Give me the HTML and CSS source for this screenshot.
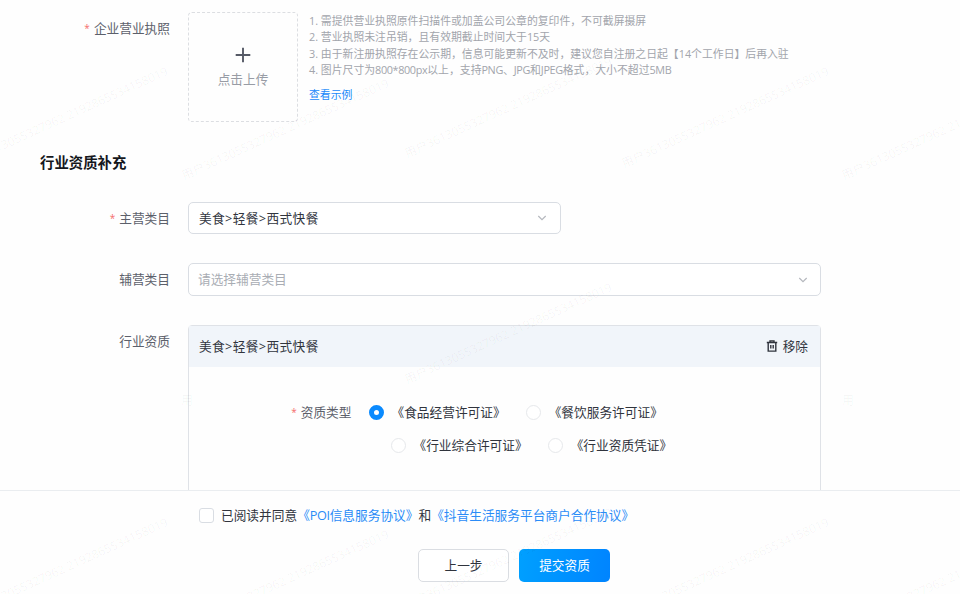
FILE: index.html
```
<!DOCTYPE html>
<html lang="zh-CN">
<head>
<meta charset="utf-8">
<title>行业资质补充</title>
<link rel="stylesheet" href="styles.css">
</head>
<body>
<main class="content">
  <section class="row license">
    <div class="label license-label"><i class="req">*</i>企业营业执照</div>
    <div class="upload">
      <svg class="plus" width="16" height="16" viewBox="0 0 16 16"><path d="M8 .7v14.6M.7 8h14.6" stroke="#565a66" stroke-width="1.9"/></svg>
      <span>点击上传</span>
    </div>
    <div class="hints">
      <p>1. 需提供营业执照原件扫描件或加盖公司公章的复印件，不可截屏摄屏</p>
      <p>2. 营业执照未注吊销，且有效期截止时间大于15天</p>
      <p>3. 由于新注册执照存在公示期，信息可能更新不及时，建议您自注册之日起【14个工作日】后再入驻</p>
      <p>4. 图片尺寸为<span class="latin">800*800px</span>以上，支持<span class="latin">PNG</span>、<span class="latin">JPG</span>和<span class="latin">JPEG</span>格式，大小不超过<span class="latin">5MB</span></p>
      <a class="example">查看示例</a>
    </div>
  </section>
  <h2 class="title">行业资质补充</h2>
  <section class="row main-cat">
    <div class="label"><i class="req">*</i>主营类目</div>
    <div class="select short"><span class="path">美食&gt;轻餐&gt;西式快餐</span>
      <svg width="10" height="8" viewBox="0 0 10 8"><path d="M1.3 2 5 5.6 8.700 2" fill="none" stroke="#b5b8be" stroke-width="1.2"/></svg></div>
  </section>
  <section class="row sub-cat">
    <div class="label">辅营类目</div>
    <div class="select"><span class="placeholder">请选择辅营类目</span>
      <svg width="10" height="8" viewBox="0 0 10 8"><path d="M1.3 2 5 5.6 8.700 2" fill="none" stroke="#b5b8be" stroke-width="1.2"/></svg></div>
  </section>
  <section class="row industry">
    <div class="label">行业资质</div>
    <div class="panel">
      <div class="panel-head"><span class="path">美食&gt;轻餐&gt;西式快餐</span>
        <span class="remove"><svg width="12" height="12" viewBox="0 0 12 12" fill="none" stroke="#30343d" stroke-width="1.4"><path d="M.8 2.500h10.400M4 2.200V.9h4v1.300M2.200 2.500v8.600h7.600V2.500M4.800 5v3.600M7.200 5v3.600"/></svg>移除</span>
      </div>
      <div class="panel-body">
        <div class="type-label"><i class="req">*</i>资质类型</div>
        <div class="radios">
          <div class="radio-row"><span class="radio"><b class="dot on"></b>《食品经营许可证》</span><span class="radio"><b class="dot"></b>《餐饮服务许可证》</span></div>
          <div class="radio-row second"><span class="radio"><b class="dot"></b>《行业综合许可证》</span><span class="radio"><b class="dot"></b>《行业资质凭证》</span></div>
        </div>
      </div>
    </div>
  </section>
</main>
<footer class="footer">
  <div class="agree"><b class="check"></b><span>已阅读并同意<a>《<span class="poi">POI</span>信息服务协议》</a>和<a>《抖音生活服务平台商户合作协议》</a></span></div>
  <div class="actions"><button class="btn">上一步</button><button class="btn primary">提交资质</button></div>
</footer>
<svg class="watermark" width="960" height="594" viewBox="0 0 960 594">
  <defs><text id="mark" textLength="226" transform="rotate(-24.500)">用户3613055327962 2192865534158019</text></defs>
  <use href="#mark" transform="translate(-37 168)"/>
  <use href="#mark" transform="translate(184 180)"/>
  <use href="#mark" transform="translate(407 158)"/>
  <use href="#mark" transform="translate(624 168)"/>
  <use href="#mark" transform="translate(844 180)"/>
  <use href="#mark" transform="translate(407 384)"/>
  <use href="#mark" transform="translate(-37 619)"/>
  <use href="#mark" transform="translate(184 631)"/>
  <use href="#mark" transform="translate(407 609)"/>
  <use href="#mark" transform="translate(624 619)"/>
  <use href="#mark" transform="translate(844 631)"/>
  <text x="181" y="405">用</text>
  <text x="842" y="405">用</text>
</svg>
</body>
</html>
```
FILE: styles.css
```
* { box-sizing: border-box; }
body {
  margin: 0;
  width: 960px;
  height: 594px;
  overflow: hidden;
  display: flex;
  flex-direction: column;
  background: #fefefe;
  color: #30343d;
  font: 12.7px/18px "Open Sans", "Noto Sans CJK SC", sans-serif;
}
p, h2 { margin: 0; }
.content { height: 490px; overflow: hidden; padding-top: 12px; }
.row { display: flex; align-items: flex-start; }
.label { width: 170px; margin-right: 18px; padding-top: 7px; text-align: right; color: #5c606b; flex: none; }
.req { color: #f56c6c; font-style: normal; font-size: 10px; line-height: 10px; margin-right: 4px; vertical-align: 1px; }
.license { height: 110px; }
.upload {
  width: 110px;
  height: 110px;
  border: 1px dashed #dcdee2;
  border-radius: 4px;
  display: flex;
  flex-direction: column;
  align-items: center;
  padding-top: 34px;
  color: #989ca5;
}
.plus { margin-bottom: 7px; }
.hints { margin-left: 11px; padding-top: 1px; color: #a2a5ac; font-size: 10.85px; line-height: 16.4px; white-space: nowrap; }
.latin { letter-spacing: -.37px; }
.example { display: block; margin-top: 8px; color: #1989fa; }
.title { margin: 31px 0 0 40px; font-size: 14.4px; line-height: 20px; font-weight: 700; color: #15171c; }
.main-cat { margin-top: 29px; }
.select {
  width: 633px;
  height: 33px;
  padding: 0 12px 0 9px;
  border: 1px solid #d9dde3;
  border-radius: 5px;
  background: #fff;
  display: flex;
  align-items: center;
  justify-content: space-between;
}
.short { width: 373px; height: 32px; padding-left: 10px; padding-right: 13px; }
.path { letter-spacing: .37px; }
.placeholder { color: #a9adb4; padding-bottom: 2px; }
.sub-cat { margin-top: 29px; }
.industry { margin-top: 29px; }
.panel { width: 633px; height: 200px; border: 1px solid #dfe2e7; border-radius: 4px 4px 0 0; }
.panel-head {
  height: 41px;
  padding: 0 12px 2px 10px;
  background: #f1f5fa;
  display: flex;
  align-items: center;
  justify-content: space-between;
}
.remove { display: flex; align-items: center; gap: 5px; }
.panel-body { display: flex; padding-top: 36px; }
.type-label { width: 162.5px; text-align: right; color: #5c606b; margin-right: 17.5px; }
.radio-row { display: flex; gap: 20.5px; height: 18px; }
.second { margin: 15px 0 0 22px; }
.radio { display: flex; align-items: center; gap: 7.500px; white-space: nowrap; }
.dot { width: 15px; height: 15px; border: 1px solid #e6e8eb; border-radius: 50%; background: #fff; }
.on { border: 4.500px solid #0a8afe; border-width: 5px; }
.footer { height: 104px; border-top: 1px solid #eaedf0; padding-top: 15px; }
.agree { display: flex; align-items: center; height: 18px; margin-left: 199px; gap: 7px; white-space: nowrap; }
.check { width: 15px; height: 15px; border: 1px solid #d9dde3; border-radius: 3px; background: #fff; }
.agree a { color: #2a8cf7; }
.poi { letter-spacing: -.4px; }
.actions { display: flex; gap: 10px; margin: 25px 0 0 418px; }
.btn {
  width: 91px;
  height: 33px;
  padding: 0 0 2px;
  border: 1px solid #dadde2;
  border-radius: 5px;
  background: #fff;
  color: #30343d;
  font: inherit;
}
.primary { border: 0; color: #fff; background: linear-gradient(100deg, #00a0ff, #0084ff); }
.watermark { position: absolute; left: 0; top: 0; pointer-events: none; font-size: 12px; fill: rgba(0, 0, 0, .045); }
```
